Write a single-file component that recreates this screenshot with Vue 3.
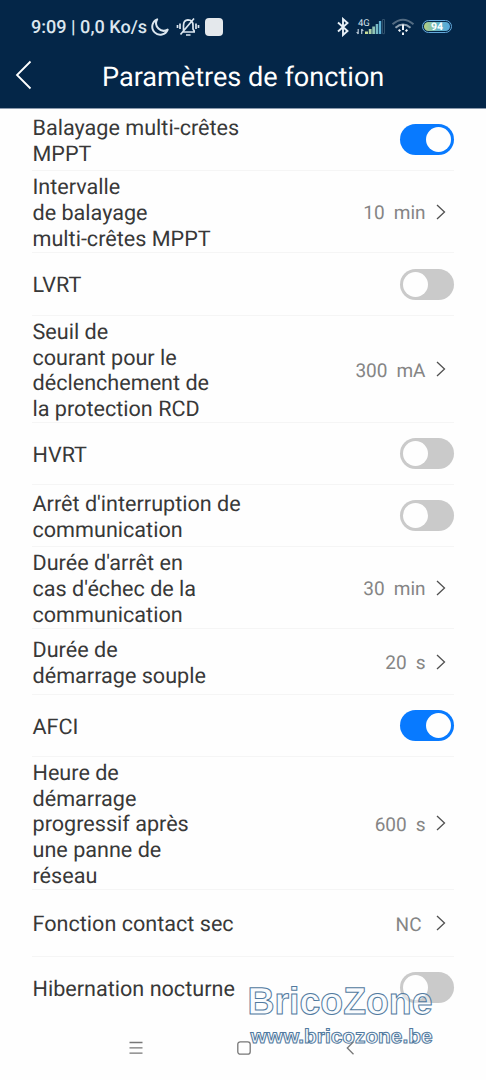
<script setup>
const rows = [
  { lines: ['Balayage multi-crêtes', 'MPPT'], h: 62, on: true },
  { lines: ['Intervalle', 'de balayage', 'multi-crêtes MPPT'], h: 82, value: '10', unit: 'min' },
  { lines: ['LVRT'], h: 63, on: false },
  { lines: ['Seuil de', 'courant pour le', 'déclenchement de', 'la protection RCD'], h: 107, value: '300', unit: 'mA' },
  { lines: ['HVRT'], h: 62, on: false },
  { lines: ["Arrêt d'interruption de", 'communication'], h: 62, on: false },
  { lines: ["Durée d'arrêt en", "cas d'échec de la", 'communication'], h: 82, value: '30', unit: 'min' },
  { lines: ['Durée de', 'démarrage souple'], h: 66, value: '20', unit: 's' },
  { lines: ['AFCI'], h: 62, on: true },
  { lines: ['Heure de', 'démarrage', 'progressif après', 'une panne de', 'réseau'], h: 133, value: '600', unit: 's' },
  { lines: ['Fonction contact sec'], h: 67, value: 'NC' },
  { lines: ['Hibernation nocturne'], h: 61, on: false, last: true },
]
</script>

<template>
  <div class="screen">
    <header class="top">
      <div class="status">
        <span class="clock">9:09 | 0,0 Ko/s</span>
        <svg class="moon" width="20" height="20" viewBox="0 0 20 20"><path d="M7.2 2.3A8 8 0 1 0 17.7 12.6A7.6 7.6 0 0 1 7.2 2.3Z" /></svg>
        <svg class="bell" width="24" height="20" viewBox="0 0 24 20">
          <path d="M6 15H19M7.5 14.5V8.5C7.5 5 9.5 3 12 2.8C15 2.8 17 5 17 8.5V12L18.5 14.5M4.5 17.5L18 1.5M10 18H14.5M4 6.5V12M1.5 8V11M20 6.5V12M22.5 8V11" />
        </svg>
        <i class="app-square"></i>
        <span class="spacer"></span>
        <svg class="bluetooth" width="14" height="20" viewBox="0 0 14 20"><path d="M2 5.5L11.5 14L7 18V2L11.5 6L2 14.5" /></svg>
        <svg class="signal" width="30" height="20" viewBox="0 0 30 20">
          <defs><linearGradient id="sig" gradientUnits="userSpaceOnUse" x1="9" x2="25" y1="0" y2="0"><stop offset="0" stop-color="#d3e08f" /><stop offset="1" stop-color="#58add8" /></linearGradient></defs>
          <text x="2" y="8.6">4G</text>
          <path class="arrows" d="M2.2 12V17M5.7 12V17M.7 15L2.2 17M5.7 12L7.3 14" />
          <path fill="url(#sig)" d="M9 14.5H12V17H9ZM12.8 12H15.6V17H12.8ZM16.3 9.5H19V17H16.3ZM19.7 7H22.2V17H19.7ZM22.9 4H25.2V17H22.9Z" />
          <path class="empty" d="M26.5 2.5H28.5V16.7H26.5Z" />
        </svg>
        <svg class="wifi" width="24" height="20" viewBox="0 0 24 20">
          <path class="dim" d="M1.5 7.2Q12-1.8 22.5 7.2" />
          <path class="mid" d="M4.5 10.7Q12 4.3 19.5 10.7" />
          <path d="M12 7.5V13M7.7 12.6L9.3 14.4M16.3 12.6L14.7 14.4M12 15.5V18" />
        </svg>
        <span class="battery"><b>94</b></span>
      </div>
      <div class="title-bar">
        <svg class="back" width="18" height="30" viewBox="0 0 18 30"><path d="M15.5 1.5L2 15L15.5 28.5" /></svg>
        <h1>Paramètres de fonction</h1>
      </div>
    </header>

    <main>
      <div v-for="(row, i) in rows" :key="i" class="row" :class="{ last: row.last }" :style="{ height: row.h + 'px' }">
        <div class="label"><div v-for="line in row.lines" :key="line">{{ line }}</div></div>
        <div v-if="row.value" class="value">
          <span>{{ row.value }}</span><span class="unit" :class="{ none: !row.unit }">{{ row.unit }}</span>
          <svg width="10" height="16" viewBox="0 0 10 16"><path d="M1 1L8.5 8L1 15" /></svg>
        </div>
        <div v-else class="toggle" :class="{ on: row.on }"><i></i></div>
      </div>
    </main>

    <nav>
      <svg width="14" height="14" viewBox="0 0 14 14"><path d="M.5 1.5H13.5M.5 6.8H13.5M.5 12.2H13.5" /></svg>
      <svg width="14" height="14" viewBox="0 0 14 14"><rect x=".8" y=".8" width="12.4" height="12.4" rx="2.5" /></svg>
      <svg width="14" height="14" viewBox="0 0 14 14"><path d="M9.5 .8L3.3 7L9.5 13.2" /></svg>
    </nav>

    <svg class="watermark" width="200" height="80" viewBox="0 0 200 80">
      <text class="brand" x="6.5" y="34" textLength="185" lengthAdjust="spacingAndGlyphs">BricoZone</text>
      <text class="site" x="9.5" y="62.5" textLength="182" lengthAdjust="spacingAndGlyphs">www.bricozone.be</text>
    </svg>
  </div>
</template>

<style>
body { margin: 0; background: #fefefe; }
</style>

<style scoped>
.screen {
  position: relative;
  width: 486px;
  height: 1080px;
  overflow: hidden;
  background: #fefefe;
  font-family: Roboto, "Liberation Sans", sans-serif;
  color: #383838;
  text-rendering: geometricPrecision;
}
svg { display: block; fill: none; flex: none; }
.top { height: 108px; background: #042648; border-bottom: 1px solid #8b9aad; box-sizing: content-box; }
.status {
  display: flex;
  align-items: center;
  height: 44px;
  padding: 9px 33px 0 31px;
  box-sizing: border-box;
  color: #dce6ef;
}
.clock { padding-top: 1px; font-size: 18.1px; font-weight: 500; white-space: nowrap; width: 119px; }
.moon path { stroke: #dce6ef; stroke-width: 2; stroke-linejoin: round; }
.bell { margin-left: 6px; }
.bell path { stroke: #dce6ef; stroke-width: 1.7; }
.app-square { width: 18px; height: 18px; margin-left: 5px; border-radius: 4px; background: #e4e8ec; }
.spacer { flex: 1; }
.bluetooth path { stroke: #e8f0f6; stroke-width: 1.9; }
.signal { margin-left: 6px; }
.signal text { font-size: 9.5px; fill: #dce6ef; }
.signal .arrows { stroke: #b9c8d6; stroke-width: 1.2; }
.signal .empty { stroke: #31516c; stroke-width: 1; }
.wifi { margin-left: 5px; }
.wifi path { stroke: #f0f4f8; stroke-width: 2; }
.wifi .dim { stroke: #536b82; }
.wifi .mid { stroke: #8fa0b0; }
.battery {
  width: 30px;
  height: 13px;
  margin-left: 7px;
  margin-right: 1px;
  padding: 1px;
  border: 1.5px solid #62a8db;
  border-radius: 8px;
  box-sizing: border-box;
}
.battery b {
  display: block;
  height: 9px;
  border-radius: 5px;
  background: linear-gradient(90deg, #b8cf80, #65b6c4 50%, #58a8dc);
  color: #fff;
  font-size: 10.5px;
  line-height: 9.5px;
  text-align: center;
}
.title-bar { display: grid; grid-template-columns: 87px 1fr; align-items: center; height: 62px; padding-left: 15px; }
.back path { stroke: #fff; stroke-width: 1.8; }
h1 { margin: 3px 0 0; color: #fff; font-size: 27.1px; font-weight: 400; line-height: 32px; white-space: nowrap; }
main { padding: 0 32px 0 32px; }
.row {
  display: flex;
  align-items: center;
  justify-content: space-between;
  box-sizing: border-box;
  border-bottom: 1px solid #f5f5f5;
}
.row.last { border: 0; }
.label { padding: 4.6px 0 0 0.5px; font-size: 21.6px; line-height: 25.7px; white-space: nowrap; }
.value { display: flex; align-items: center; padding-right: 8px; color: #858585; font-size: 19px; }
.value span { position: relative; top: 1px; }
.unit { margin-left: 9px; }
.unit.none { margin-left: 4px; }
.value svg { margin-left: 10.5px; }
.value path { stroke: #505050; stroke-width: 1.3; }
.toggle { width: 54px; height: 31px; border-radius: 16px; background: #cacaca; }
.toggle i { display: block; width: 25px; height: 25px; margin: 3px; border-radius: 50%; background: #fefefe; }
.toggle.on { background: #087aff; }
.toggle.on i { margin-left: 26px; }
nav { display: flex; justify-content: space-between; padding: 23px 128px 0 129px; }
nav svg { stroke: #777; stroke-width: 1.3; }
.watermark {
  position: absolute;
  left: 241px;
  top: 980px;
  font-family: "Liberation Sans", Arial, sans-serif;
  font-weight: 700;
}
.watermark text { stroke: #527a9f; stroke-width: 1; fill: #f4fbff; fill-opacity: 0.5; }
.watermark .brand { font-size: 38px; }
.watermark .site { font-size: 20px; }
</style>
